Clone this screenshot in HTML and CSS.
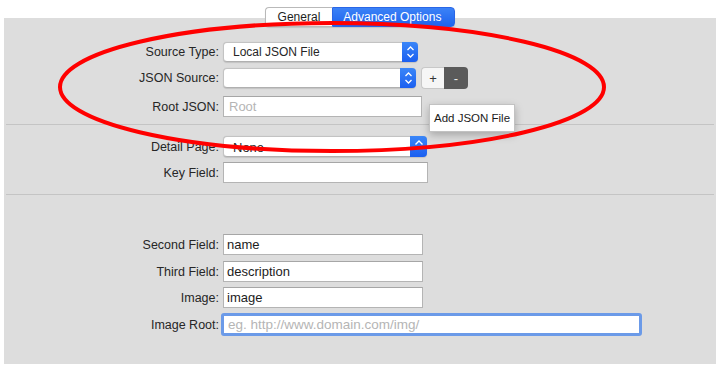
FILE: index.html
```html
<!DOCTYPE html>
<html>
<head>
<meta charset="utf-8">
<link rel="stylesheet" href="styles.css">
</head>
<body>
<div class="page">
  <div class="tabs">
    <div class="tab">General</div>
    <div class="tab active">Advanced Options</div>
  </div>
  <div class="panel">
    <div class="section s1">
      <div class="row r1">
        <label class="lbl">Source Type:</label>
        <div class="select w195"><span class="val">Local JSON File</span><span class="stepper"><svg width="9" height="14" viewBox="0 0 9 14"><path d="M1.5 5 L4.5 2 L7.5 5 M1.5 9 L4.5 12 L7.5 9" fill="none" stroke="#fff" stroke-width="1.3"/></svg></span></div>
      </div>
      <div class="row r2">
        <label class="lbl">JSON Source:</label>
        <div class="select w193"><span class="val"></span><span class="stepper"><svg width="9" height="14" viewBox="0 0 9 14"><path d="M1.5 5 L4.5 2 L7.5 5 M1.5 9 L4.5 12 L7.5 9" fill="none" stroke="#fff" stroke-width="1.3"/></svg></span></div>
        <div class="segbtns"><span class="seg plus">+</span><span class="seg minus">-</span></div>
      </div>
      <div class="row r3">
        <label class="lbl">Root JSON:</label>
        <div class="input w199 ph">Root</div>
        <div class="tooltip">Add JSON File</div>
      </div>
    </div>
    <div class="sep"></div>
    <div class="section s2">
      <div class="row r4">
        <label class="lbl">Detail Page:</label>
        <div class="select w204"><span class="val">None</span><span class="stepper wide"><svg width="10" height="8" viewBox="0 0 10 8"><path d="M1.5 5.5 L5 2 L8.5 5.5" fill="none" stroke="#fff" stroke-width="1.4"/></svg></span></div>
      </div>
      <div class="row r5">
        <label class="lbl">Key Field:</label>
        <div class="input w205"></div>
      </div>
    </div>
    <div class="sep"></div>
    <div class="section s3">
      <div class="row r6">
        <label class="lbl">Second Field:</label>
        <div class="input w200">name</div>
      </div>
      <div class="row r7">
        <label class="lbl">Third Field:</label>
        <div class="input w200">description</div>
      </div>
      <div class="row r8">
        <label class="lbl">Image:</label>
        <div class="input w200">image</div>
      </div>
      <div class="row r9">
        <label class="lbl">Image Root:</label>
        <div class="input focus ph">eg. http://www.domain.com/img/</div>
      </div>
    </div>
  </div>
  <svg class="annot" width="723" height="376" viewBox="0 0 723 376"><ellipse cx="332" cy="87" rx="272" ry="64" fill="none" stroke="#ff0000" stroke-width="4"/></svg>
</div>
</body>
</html>
```

FILE: styles.css
```css
html, body {
  margin: 0;
  padding: 0;
  background: #ffffff;
}
body {
  font-family: "Liberation Sans", Arial, sans-serif;
  font-size: 13px;
  color: #262626;
}
.page {
  position: relative;
  width: 723px;
  height: 376px;
  padding: 7px 7px 0 4px;
  box-sizing: border-box;
}
.tabs {
  position: relative;
  z-index: 1;
  display: flex;
  justify-content: center;
  height: 20px;
}
.tab {
  height: 20px;
  box-sizing: border-box;
  line-height: 19px;
  font-size: 12px;
  padding: 0 12px;
  background: #fff;
  border: 1px solid #b9b9b9;
  border-right: none;
  border-radius: 4px 0 0 4px;
  color: #1e1e1e;
  box-shadow: 0 1px 1px rgba(0,0,0,0.12);
}
.tab.active {
  background: linear-gradient(#3b82f7, #1f63ee);
  color: #fff;
  border: 1px solid #2a66e6;
  border-radius: 0 4px 4px 0;
  padding: 0 13px 0 10px;
}
.panel {
  margin-top: -9px;
  height: 346px;
  background: #dddddd;
  box-sizing: border-box;
}
.sep {
  height: 1px;
  margin: 0 2px;
  background: #c4c4c4;
}
.section { display: flex; flex-direction: column; }
.s1 { height: 106px; padding-top: 24px; box-sizing: border-box; }
.s2 { height: 69px; padding-top: 11px; box-sizing: border-box; }
.s3 { padding-top: 39px; }
.row {
  display: flex;
  align-items: center;
  position: relative;
}
.r2 { margin-top: 5px; }
.r3 { margin-top: 7px; }
.r5 { margin-top: 5px; }
.r7 { margin-top: 6px; }
.r8 { margin-top: 5px; }
.r9 { margin-top: 5px; }
.lbl {
  width: 217px;
  text-align: right;
  padding-right: 2px;
  box-sizing: border-box;
  white-space: nowrap;
  font-size: 12.5px;
}
.select {
  height: 20px;
  box-sizing: border-box;
  display: flex;
  background: #fff;
  border: 1px solid #c3c3c3;
  border-bottom-color: #b0b0b0;
  border-radius: 4px;
  box-shadow: 0 0.5px 1px rgba(0,0,0,0.12);
  margin-left: 2px;
}
.r4 .select { height: 21px; }
.select .val {
  flex: 1;
  font-size: 12px;
  line-height: 19px;
  padding-left: 9px;
}
.r4 .select .val { font-size: 13px; line-height: 21px; }
.stepper {
  width: 16px;
  margin: -1px -1px -1px 0;
  background: linear-gradient(#3a86f8, #1b5ff0);
  border-radius: 0 4px 4px 0;
  display: flex;
  align-items: center;
  justify-content: center;
}
.stepper.wide { width: 17px; align-items: flex-start; padding-top: 3px; box-sizing: border-box; }
.w195 { width: 195px; }
.w193 { width: 193px; }
.w204 { width: 204px; }
.segbtns {
  display: flex;
  margin-left: 5px;
  height: 22px;
}
.seg {
  width: 23px;
  display: flex;
  align-items: center;
  justify-content: center;
  font-size: 13px;
  box-sizing: border-box;
}
.seg.plus {
  background: #f6f6f6;
  border: 1px solid #c8c8c8;
  border-right: none;
  border-radius: 4px 0 0 4px;
  color: #333;
}
.seg.minus {
  width: 24px;
  background: #5a5a5a;
  color: #e8e8e8;
  border-radius: 0 4px 4px 0;
}
.input {
  height: 21px;
  box-sizing: border-box;
  background: #fff;
  border: 1px solid #b4b4b4;
  border-top-color: #a6a6a6;
  margin-left: 2px;
  padding-left: 3px;
  line-height: 19px;
  font-size: 13px;
  color: #1c1c1c;
  white-space: nowrap;
  overflow: hidden;
}
.input.ph { color: #b5b5b5; padding-left: 5px; }
.w199 { width: 199px; }
.w205 { width: 205px; }
.w200 { width: 200px; }
.input.focus {
  width: 421px;
  height: 23px;
  margin-left: 0;
  border: 3px solid #6b9ae8;
  border-radius: 3px;
  line-height: 17px;
  padding-left: 4px;
  font-size: 13.5px;
}
.tooltip {
  position: absolute;
  left: 425px;
  top: 8px;
  height: 28px;
  padding: 0 4px;
  box-sizing: border-box;
  background: #fff;
  border: 1px solid #c2c2c2;
  box-shadow: 0 3px 8px rgba(0,0,0,0.25);
  font-size: 11.5px;
  line-height: 26px;
  color: #1a1a1a;
  z-index: 2;
}
.annot {
  position: absolute;
  left: 0;
  top: 0;
  pointer-events: none;
  z-index: 5;
}
```
